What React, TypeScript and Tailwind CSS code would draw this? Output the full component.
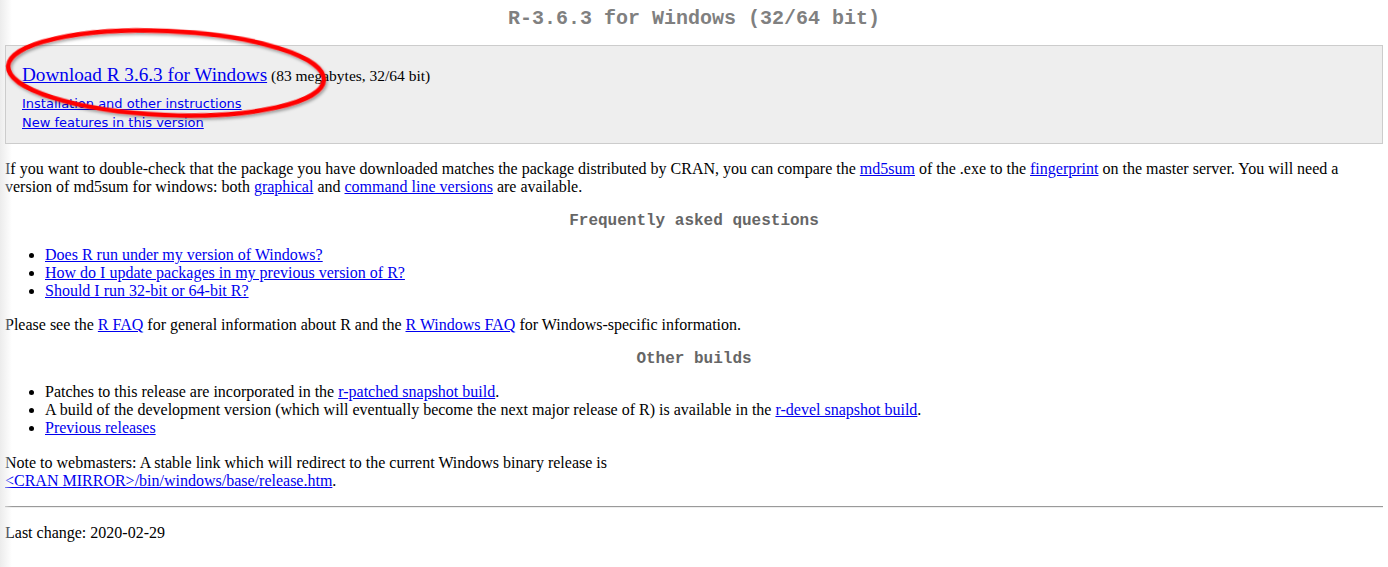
import React from "react";

const serif = "font-['Liberation_Serif','Times_New_Roman',serif]";
const mono = "font-['Liberation_Mono','Courier_New',monospace]";
const sans = "font-['DejaVu_Sans',Verdana,sans-serif]";

function A({ children }: { children: React.ReactNode }) {
  return <a href="#" className="text-[#0000ee] underline">{children}</a>;
}

export default function App() {
  return (
    <div className={`relative min-h-[567px] bg-white text-black ${serif} text-[16px] leading-[18px] px-[5px]`}>
      <div className="pointer-events-none absolute left-0 top-0 h-full w-[12px] bg-gradient-to-r from-[#ececec] to-transparent" />

      <h1 className={`${mono} pt-[7px] text-center text-[20px] leading-[24px] font-bold text-[#808080]`}>
        R-3.6.3 for Windows (32/64 bit)
      </h1>

      <div className="relative mt-[14px] border border-[#cccccc] bg-[#eeeeee] pl-[16px] pt-[18px] pb-[11px]">
        <div className="leading-[22px]">
          <a href="#" className="text-[19.2px] text-[#0000ee] underline">Download R 3.6.3 for Windows</a>
          <span className="text-[15.5px]"> (83 megabytes, 32/64 bit)</span>
        </div>
        <div className={`${sans} mt-[7px] flex flex-col text-[13px] leading-[19px]`}>
          <div><A>Installation and other instructions</A></div>
          <div><A>New features in this version</A></div>
        </div>
      </div>

      <p className="mt-[16px]">
        If you want to double-check that the package you have downloaded matches the package distributed by CRAN, you can compare the <A>md5sum</A> of the .exe to the <A>fingerprint</A> on the master server. You will need a version of md5sum for windows: both <A>graphical</A> and <A>command line versions</A> are available.
      </p>

      <h2 className={`${mono} mt-[16px] text-center text-[16px] leading-[18px] font-bold text-[#666666]`}>
        Frequently asked questions
      </h2>

      <ul className="mt-[16px] list-disc pl-[40px]">
        <li><A>Does R run under my version of Windows?</A></li>
        <li><A>How do I update packages in my previous version of R?</A></li>
        <li><A>Should I run 32-bit or 64-bit R?</A></li>
      </ul>

      <p className="mt-[16px]">
        Please see the <A>R FAQ</A> for general information about R and the <A>R Windows FAQ</A> for Windows-specific information.
      </p>

      <h2 className={`${mono} mt-[16px] text-center text-[16px] leading-[18px] font-bold text-[#666666]`}>
        Other builds
      </h2>

      <ul className="mt-[15px] list-disc pl-[40px]">
        <li>Patches to this release are incorporated in the <A>r-patched snapshot build</A>.</li>
        <li>A build of the development version (which will eventually become the next major release of R) is available in the <A>r-devel snapshot build</A>.</li>
        <li><A>Previous releases</A></li>
      </ul>

      <p className="mt-[17px]">
        Note to webmasters: A stable link which will redirect to the current Windows binary release is
        <br />
        <A>&lt;CRAN MIRROR&gt;/bin/windows/base/release.htm</A>.
      </p>

      <hr className="mt-[16px] border-t border-b border-t-[#9a9a9a] border-b-[#eeeeee]" />

      <p className="mt-[16px]">Last change: 2020-02-29</p>

      <svg
        className="pointer-events-none absolute left-0 top-0"
        width="360"
        height="140"
        viewBox="0 0 360 140"
      >
        <defs>
          <filter id="sh" x="-20%" y="-40%" width="140%" height="180%">
            <feDropShadow dx="1.5" dy="2" stdDeviation="1.5" floodColor="#000" floodOpacity="0.35" />
          </filter>
        </defs>
        <ellipse
          cx="166"
          cy="73"
          rx="158"
          ry="42"
          fill="none"
          stroke="#ff0000"
          strokeWidth="4.5"
          transform="rotate(2.5 166 73)"
          filter="url(#sh)"
        />
      </svg>
    </div>
  );
}
